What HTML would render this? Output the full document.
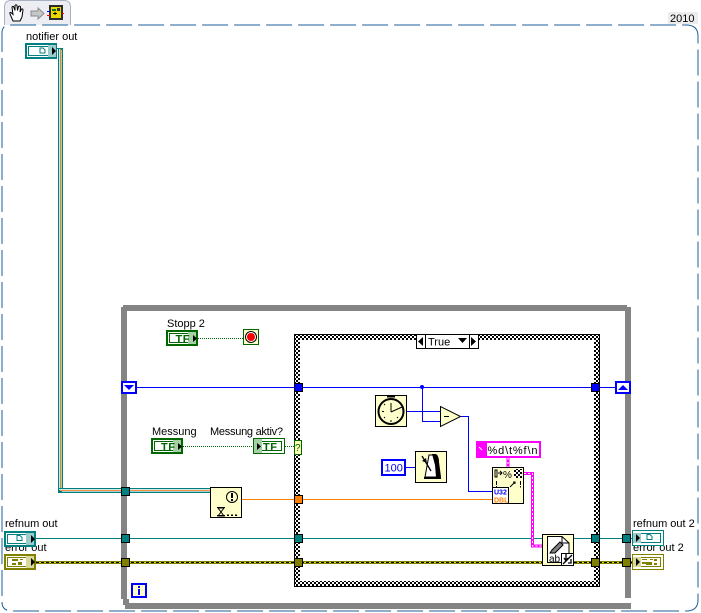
<!DOCTYPE html>
<html><head><meta charset="utf-8">
<style>
html,body{margin:0;padding:0;background:#fff;width:701px;height:613px;overflow:hidden}
svg{display:block}
text{font-family:"Liberation Sans",sans-serif;font-size:11px;fill:#000}
.c{shape-rendering:crispEdges}
</style></head><body>
<svg width="701" height="613" viewBox="0 0 701 613" xmlns="http://www.w3.org/2000/svg">
<defs>
<pattern id="chk" width="4" height="4" patternUnits="userSpaceOnUse">
<rect width="4" height="4" fill="#fff"/><rect width="2" height="2" fill="#000"/><rect x="2" y="2" width="2" height="2" fill="#000"/>
</pattern>
</defs>

<!-- tab -->
<path d="M4.5 25V7Q4.5 .5 11 .5H64Q70.5 .5 70.5 7V25" fill="#edeef3" stroke="#a9b0bf"/>
<path d="M13 21l-3-7q-.5-2 1-1.500l2 2-1-7q0-1.500 1.500-1l1.500 4 0-5q1-1.500 2 0l.5 5 1-4q1.500-1 2 .5l-.5 5 1.500-3q1.500-.5 1.500 1l-1 7-2 4z" fill="#fff" stroke="#000" stroke-width="1"/>
<path d="M31 11h7V8l6 5.500-6 5.500v-3h-7z" fill="#c6c8c8" stroke="#8b8b8b" stroke-width="1"/>
<g class="c">
<rect x="49" y="5" width="14" height="15" fill="#2b2b2b"/>
<rect x="51" y="7" width="10" height="11" fill="#e8d800"/>
<rect x="52" y="9" width="4" height="2" fill="#0a7a20"/><rect x="57" y="8" width="3" height="3" fill="#333"/>
<rect x="53" y="13" width="4" height="1" fill="#000"/><rect x="54.500" y="12" width="1" height="3" fill="#000"/>
<rect x="47" y="11" width="3" height="1" fill="#0000ff"/><rect x="47" y="15" width="3" height="1" fill="#f00"/><rect x="62" y="13" width="2" height="1" fill="#f00"/>
</g>

<!-- diagram dashed border -->
<path d="M2 596V33Q2 25 10 25H688" fill="none" stroke="#1c5f97" stroke-width="1" stroke-dasharray="26 6"/>
<path d="M686 25Q698 25 698 36V600Q698 611 686 611H12Q2 611 2 602" fill="none" stroke="#1c5f97" stroke-width="1" stroke-dasharray="26 6"/>
<rect class="c" x="668" y="12" width="30" height="12" fill="#ececec"/>
<text x="670" y="22">2010</text>

<!-- while loop frame -->
<g class="c" fill="#848484">
<rect x="121" y="307" width="6" height="292"/>
<rect x="123" y="305" width="504" height="6"/>
<rect x="625" y="307" width="6" height="291"/>
<rect x="123" y="599" width="6" height="6"/>
<rect x="125" y="603" width="506" height="6"/>
<rect x="623" y="305" width="4" height="2"/>
</g>

<!-- case structure -->
<g class="c">
<rect x="294" y="334" width="306" height="253" fill="url(#chk)"/>
<rect x="300" y="340" width="294" height="241" fill="#fff"/>
<rect x="294" y="334" width="1" height="253" fill="#000"/>
<rect x="294" y="334" width="306" height="1" fill="#000"/>
<rect x="599" y="334" width="1" height="253" fill="#000"/>
<rect x="294" y="586" width="306" height="1" fill="#000"/>
</g>

<!-- selector -->
<g class="c">
<rect x="416.500" y="334.500" width="62" height="14" fill="#fff" stroke="#000"/>
<rect x="425" y="334" width="1" height="15" fill="#000"/>
<rect x="469" y="334" width="1" height="15" fill="#000"/>
</g>
<path d="M423 337v9l-5-4.500z" fill="#000"/>
<path d="M471 337v9l5-4.500z" fill="#000"/>
<path d="M458 338h9l-4.500 5z" fill="#000"/>
<text x="428" y="345.500">True</text>

<!-- wires -->
<g class="c">
<!-- notifier bundle -->
<rect x="58" y="48" width="5" height="445" fill="#008080"/>
<rect x="59" y="49" width="1" height="443" fill="#cfe8e8"/>
<rect x="60" y="49" width="1" height="442" fill="#ff8000"/>
<rect x="61" y="50" width="1" height="441" fill="#9ad0d0"/>
<rect x="58" y="488" width="152" height="5" fill="#008080"/>
<rect x="59" y="489" width="151" height="1" fill="#cfe8e8"/>
<rect x="60" y="490" width="150" height="1" fill="#ff9040"/>
<rect x="62" y="491" width="148" height="1" fill="#9ad0d0"/>
<rect x="57" y="48" width="6" height="1" fill="#008080"/>
<!-- blue -->
<rect x="136" y="387" width="480" height="1" fill="#0000ff"/>
<rect x="422" y="387" width="1" height="34" fill="#0000ff"/>
<rect x="422" y="421" width="18" height="1" fill="#0000ff"/>
<rect x="407" y="411" width="33" height="1" fill="#0000ff"/>
<rect x="461" y="416" width="8" height="1" fill="#0000ff"/>
<rect x="468" y="416" width="1" height="76" fill="#0000ff"/>
<rect x="468" y="491" width="24" height="1" fill="#0000ff"/>
<rect x="406" y="467" width="9" height="1" fill="#0000ff"/>
<!-- orange -->
<rect x="242" y="499" width="250" height="1" fill="#ff8000"/>
<!-- teal -->
<rect x="36" y="538" width="495" height="1" fill="#008080"/>
<rect x="533" y="538" width="9" height="1" fill="#008080"/>
<rect x="574" y="538" width="58" height="1" fill="#008080"/>
<!-- error -->
<rect x="36" y="561" width="506" height="3" fill="#e0e000"/>
<rect x="574" y="561" width="58" height="3" fill="#e0e000"/>
<rect x="36" y="561" width="506" height="1" fill="#808000"/>
<rect x="574" y="561" width="58" height="1" fill="#808000"/>
<rect x="36" y="563" width="506" height="1" fill="#808000"/>
<rect x="574" y="563" width="58" height="1" fill="#808000"/>
</g>
<path d="M36 562.500H542M574 562.500H632" stroke="#000" stroke-width="1" stroke-dasharray="3 2" fill="none" class="c"/>
<circle cx="422" cy="387" r="2" fill="#0000ff"/>
<!-- boolean dotted -->
<path d="M198 338.500H243M183 446.500H253M285 446.500H294" stroke="#006600" stroke-width="1" stroke-dasharray="1 1" fill="none" class="c"/>
<!-- pink wires -->
<path d="M508 458V467M524 473.500H532.500V546H542" stroke="#ff00ff" stroke-width="3" fill="none" class="c"/>
<path d="M508 458V467M524 473.500H532.500V546H542" stroke="#fff" stroke-width="1" stroke-dasharray="2 2" fill="none" class="c"/>

<!-- tunnels -->
<g class="c" stroke="#000" stroke-width="1">
<rect x="121.500" y="487.500" width="8" height="8" fill="#008080"/>
<rect x="121.500" y="534.500" width="8" height="8" fill="#008080"/>
<rect x="121.500" y="558.500" width="8" height="8" fill="#808000"/>
<rect x="294.500" y="383.500" width="8" height="8" fill="#0000ff"/>
<rect x="591.500" y="383.500" width="8" height="8" fill="#0000ff"/>
<rect x="294.500" y="495.500" width="8" height="8" fill="#ff8000"/>
<rect x="294.500" y="534.500" width="8" height="8" fill="#008080"/>
<rect x="294.500" y="558.500" width="8" height="8" fill="#808000"/>
<rect x="591.500" y="534.500" width="8" height="8" fill="#008080"/>
<rect x="591.500" y="558.500" width="8" height="8" fill="#808000"/>
<rect x="622.500" y="534.500" width="8" height="8" fill="#008080"/>
<rect x="622.500" y="558.500" width="8" height="8" fill="#808000"/>
</g>

<!-- shift registers -->
<g class="c">
<rect x="122" y="382" width="14" height="11" fill="#fff" stroke="#0000ff" stroke-width="2"/>
<rect x="616" y="382" width="14" height="11" fill="#fff" stroke="#0000ff" stroke-width="2"/>
</g>
<path d="M124 385h10l-5 5z" fill="#0000ff"/>
<path d="M618 390h10l-5-5z" fill="#0000ff"/>

<!-- labels that sit behind terminals -->
<text x="5" y="551">error out</text>
<text x="633" y="551">error out 2</text>

<!-- control terminals -->
<g id="notifier" class="c">
<rect x="26" y="44" width="30" height="14" fill="#fff" stroke="#008080" stroke-width="2"/>
<rect x="28.500" y="46.500" width="22" height="9" fill="#fff" stroke="#008080"/>
<rect x="48" y="45" width="8" height="12" fill="#9bcccc"/>
</g>
<path d="M52 47l4 4-4 4z" fill="#000"/>
<path d="M40 48h3l2 2v3h-5z" fill="#fff" stroke="#008080"/>

<g class="c">
<rect x="5" y="532" width="30" height="14" fill="#fff" stroke="#008080" stroke-width="2"/>
<rect x="7.500" y="534.500" width="22" height="9" fill="#fff" stroke="#008080"/>
<rect x="26" y="533" width="8" height="12" fill="#9bcccc"/>
</g>
<path d="M31 535l4 4-4 4z" fill="#000"/>
<path d="M17 535.500h3l2 2v3h-5z" fill="#fff" stroke="#008080"/>

<g class="c">
<rect x="5" y="555" width="30" height="14" fill="#fff" stroke="#808000" stroke-width="2"/>
<rect x="7.500" y="557.500" width="22" height="9" fill="#fff" stroke="#808000"/>
<rect x="26" y="556" width="8" height="12" fill="#d8d89a"/>
<rect x="12" y="559" width="6" height="2" fill="#808000"/><rect x="20" y="559" width="3" height="1" fill="#808000"/>
<rect x="12" y="563" width="4" height="2" fill="#808000"/><rect x="18" y="562" width="4" height="3" fill="#808000"/>
</g>
<path d="M31 558l4 4-4 4z" fill="#000"/>

<!-- right indicators -->
<g class="c">
<rect x="632.500" y="530.500" width="31" height="15" fill="#fff" stroke="#008080"/>
<rect x="635.500" y="533.500" width="25" height="9" fill="#fff" stroke="#008080"/>
<rect x="633" y="533" width="8" height="10" fill="#9bcccc"/>
<rect x="632.500" y="554.500" width="31" height="15" fill="#fff" stroke="#808000"/>
<rect x="635.500" y="557.500" width="25" height="9" fill="#fff" stroke="#808000"/>
<rect x="633" y="557" width="8" height="10" fill="#d8d89a"/>
<rect x="642" y="559" width="5" height="1" fill="#808000"/><rect x="650" y="559" width="3" height="1" fill="#808000"/>
<rect x="642" y="562" width="4" height="2" fill="#808000"/><rect x="646" y="562" width="6" height="3" fill="#808000"/>
<rect x="654" y="559" width="3" height="2" fill="#808000"/><rect x="654" y="563" width="3" height="2" fill="#808000"/>
</g>
<path d="M636 534l4 4-4 4zM636 558l4 4-4 4z" fill="#000"/>
<path d="M647 534.500h3l2 2v3h-5z" fill="#fff" stroke="#008080"/>

<!-- boolean terminals -->
<g class="c">
<rect x="167" y="331" width="30" height="14" fill="#fff" stroke="#006600" stroke-width="2"/>
<rect x="169.500" y="333.500" width="24" height="9" fill="#fff" stroke="#006600"/>
<rect x="188" y="332" width="8" height="12" fill="#a6cfa6"/>
<rect x="152" y="439" width="30" height="14" fill="#fff" stroke="#006600" stroke-width="2"/>
<rect x="154.500" y="441.500" width="24" height="9" fill="#fff" stroke="#006600"/>
<rect x="173" y="440" width="8" height="12" fill="#a6cfa6"/>
<rect x="253.500" y="438.500" width="31" height="15" fill="#fff" stroke="#006600"/>
<rect x="256.500" y="441.500" width="25" height="9" fill="#fff" stroke="#006600"/>
<rect x="254" y="439" width="8" height="14" fill="#a6cfa6"/>
</g>
<path d="M193 335l4 3.500-4 3.500zM178 443l4 3.500-4 3.500zM257 443l4 3.500-4 3.500z" fill="#000"/>
<text x="175.500" y="342.500" textLength="14" style="font-size:11px;font-weight:bold;fill:#006600">TF</text>
<text x="161" y="450.500" textLength="14" style="font-size:11px;font-weight:bold;fill:#006600">TF</text>
<text x="263" y="450.500" textLength="14" style="font-size:11px;font-weight:bold;fill:#006600">TF</text>

<!-- stop -->
<rect class="c" x="243.500" y="329.500" width="15" height="15" fill="#ffffcc" stroke="#006600"/>
<circle cx="251" cy="337" r="5.500" fill="#fff" stroke="#000"/>
<circle cx="251" cy="337" r="4" fill="#f00"/>

<!-- selector terminal -->
<rect class="c" x="294.500" y="440.500" width="7" height="14" fill="#ffffb0" stroke="#006600"/>
<text x="295" y="451" style="font-size:10px;fill:#006600">?</text>

<!-- clock -->
<rect class="c" x="375.500" y="395.500" width="31" height="31" fill="#ffffcc" stroke="#000"/>
<circle cx="391" cy="411.500" r="12.500" fill="none" stroke="#000" stroke-width="2"/>
<path d="M391 412V403M391 412L402 407" stroke="#000" fill="none"/>
<path d="M387 396.500h8" stroke="#000" stroke-width="2" fill="none"/>
<path d="M391 420v2M382 411.500h2M384 404l1 1M398 418l-1-1M384 418l1-1" stroke="#000" fill="none"/>

<!-- subtract -->
<path d="M440.500 406.500V426.500L460.500 416.500Z" fill="#ffffcc" stroke="#000"/>
<rect class="c" x="444" y="416" width="5" height="1" fill="#000"/>

<!-- metronome -->
<rect class="c" x="415.500" y="451.500" width="31" height="31" fill="#ffffcc" stroke="#000"/>
<path d="M425 477l4-22h6l5 22z" fill="#fff" stroke="#000"/>
<path d="M432 454h4q3 2 3 8l2 15h-5l-1-12z" fill="#000"/>
<path d="M422 456l9 15" stroke="#000" fill="none" stroke-width="1.300"/>
<path d="M422 461l4-3 1 5z" fill="#000"/>
<rect class="c" x="424" y="477" width="17" height="2" fill="#000"/>

<!-- constant -->
<rect class="c" x="382" y="460" width="23" height="15" fill="#fff" stroke="#0000ff" stroke-width="2"/>
<text x="384.500" y="471.500" style="fill:#0000ff">100</text>

<!-- format string constant -->
<rect class="c" x="477" y="442" width="63" height="15" fill="#fff" stroke="#ff00ff" stroke-width="2"/>
<rect class="c" x="476" y="441" width="11" height="17" fill="#ff00ff"/>
<path d="M479 447l3 3" stroke="#fff"/>
<text x="487.500" y="454" textLength="50">%d\t%f\n</text>

<!-- format node -->
<rect class="c" x="492.500" y="467.500" width="31" height="36" fill="#ffffcc" stroke="#000"/>
<g class="c">
<rect x="493" y="488" width="15" height="8" fill="#fff"/>
<rect x="493" y="496" width="15" height="7" fill="#fff"/>
<rect x="493" y="487" width="16" height="1" fill="#000"/>
<rect x="508" y="487" width="1" height="16" fill="#000"/>
<rect x="514" y="469" width="8" height="9" fill="url(#chk)"/>
</g>
<text x="494" y="494.500" style="font-size:7px;font-weight:bold;fill:#0000ff">U32</text>
<text x="494" y="502.500" style="font-size:7px;font-weight:bold;fill:#ff8000">DBL</text>
<text x="503" y="478" style="font-size:10px">%</text>
<path d="M495 470h2v7h-2zM498 473h4M500 471l2 2-2 2" stroke="#000" fill="none" stroke-width="1"/>
<path d="M496.500 481v4M496.500 486v1.500M520.500 481v4M520.500 486v1.500" stroke="#000" fill="none"/>
<path d="M510 487l5-5M513 482h2v2" stroke="#000" fill="none"/>

<!-- write text -->
<rect class="c" x="542.500" y="534.500" width="31" height="31" fill="#ffffcc" stroke="#000"/>
<path d="M547.500 536.500H562L569 543V562.500H547.500Z" fill="#fff" stroke="#000"/>
<path d="M562 537v6h7" fill="none" stroke="#000"/>
<path d="M550 553l2-3 8-8 3 3-8 8z" fill="#808080" stroke="#000"/>
<text x="549" y="562" style="font-size:10px">ab</text>
<rect class="c" x="561.500" y="553.500" width="12" height="12" fill="#fff" stroke="#000"/>
<path d="M566 554v6M564 558l2 3 2-3M563 564l9-9M568 563h3v-4" stroke="#000" stroke-width="1.300" fill="none"/>

<!-- error wait node -->
<rect class="c" x="210.500" y="487.500" width="31" height="30" fill="#ffffcc" stroke="#000"/>
<circle cx="232" cy="497" r="5.500" fill="none" stroke="#000" stroke-width="1"/>
<rect class="c" x="231" y="493" width="2" height="5" fill="#000"/>
<rect class="c" x="231" y="499" width="2" height="2" fill="#000"/>
<path d="M218 508h6l-3 4 3 4h-6l3-4z" fill="none" stroke="#000"/>
<rect class="c" x="217" y="507" width="8" height="1" fill="#000"/>
<rect class="c" x="217" y="515" width="8" height="1" fill="#000"/>
<path d="M227 514.500h2v1.500h-2zM231 514.500h2v1.500h-2zM235 514.500h2v1.500h-2z" fill="#000"/>

<!-- iteration -->
<rect class="c" x="132" y="584" width="14" height="13" fill="#ffffcc" stroke="#0000ff" stroke-width="2"/>
<rect class="c" x="138" y="586" width="2" height="2" fill="#0000ff"/>
<rect class="c" x="138" y="589" width="2" height="6" fill="#0000ff"/>

<!-- labels -->
<text x="26" y="40">notifier out</text>
<text x="167" y="327">Stopp 2</text>
<text x="152" y="435">Messung</text>
<text x="210" y="435" textLength="73">Messung aktiv?</text>
<text x="5" y="527">refnum out</text>
<text x="633" y="527">refnum out 2</text>
</svg>
</body></html>
